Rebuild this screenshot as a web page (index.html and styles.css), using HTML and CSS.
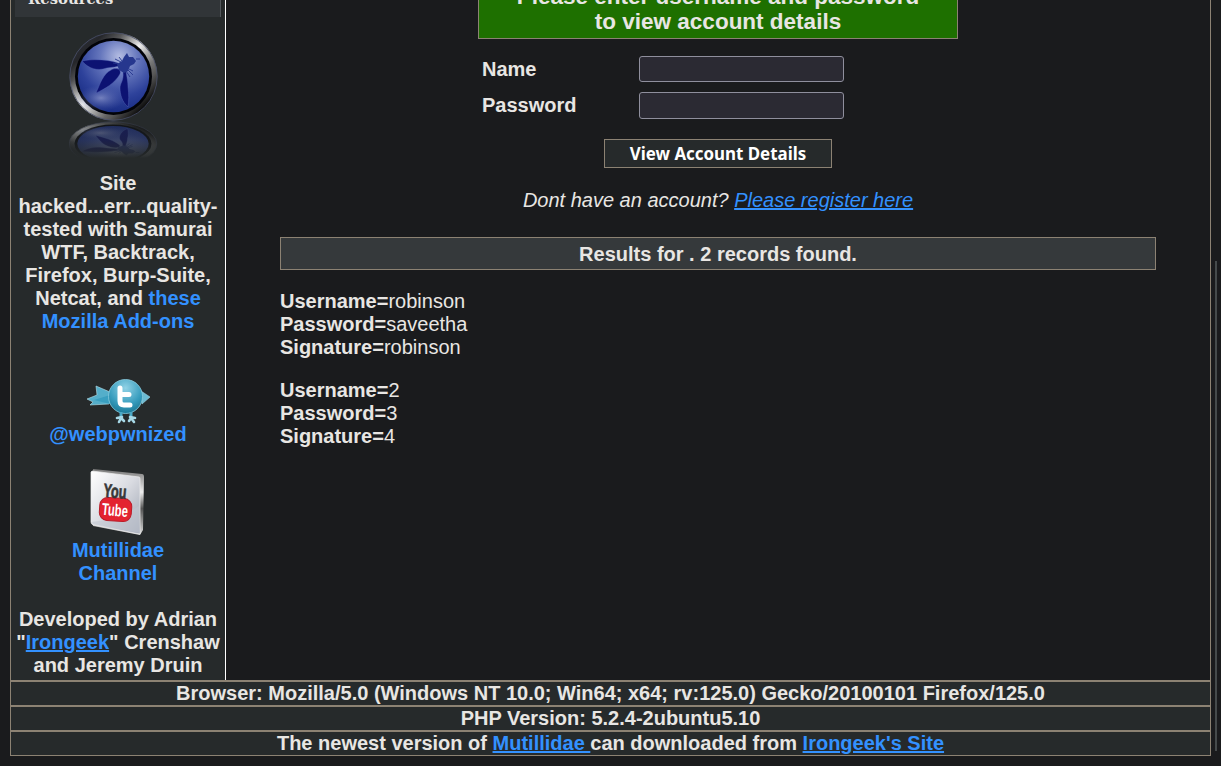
FILE: index.html
```html
<!DOCTYPE html>
<html lang="en">
<head>
<meta charset="utf-8">
<title>View Account Details</title>
<link rel="stylesheet" href="styles.css">
</head>
<body>
<div class="page">
  <div class="columns">
    <aside class="sidebar">
      <div class="menu-item"><span>Resources</span></div>
      <svg class="owasp" width="90" height="130" viewBox="0 0 90 130">
        <defs>
          <linearGradient id="ring" x1="0" y1="0" x2="1" y2="1">
            <stop offset="0" stop-color="#333a48"/><stop offset=".2" stop-color="#25262a"/><stop offset=".38" stop-color="#777"/>
            <stop offset=".5" stop-color="#aaa"/><stop offset=".72" stop-color="#555"/><stop offset=".86" stop-color="#050505"/><stop offset="1" stop-color="#555"/>
          </linearGradient>
          <radialGradient id="shineA"><stop offset="0" stop-color="#f2f2f2"/><stop offset="1" stop-color="#999" stop-opacity="0"/></radialGradient>
          <radialGradient id="blue" cx=".58" cy=".22" r=".75">
            <stop offset="0" stop-color="#b4bde2"/><stop offset=".35" stop-color="#6677bd"/><stop offset=".75" stop-color="#2e429b"/><stop offset="1" stop-color="#1c3088"/>
          </radialGradient>
          <radialGradient id="low"><stop offset="0" stop-color="#8792c8" stop-opacity=".8"/><stop offset="1" stop-color="#5060a8" stop-opacity="0"/></radialGradient>
          <linearGradient id="fade" x1="0" y1="0" x2="0" y2="1"><stop offset="0" stop-color="#262a2b" stop-opacity=".45"/><stop offset=".45" stop-color="#262a2b" stop-opacity=".55"/><stop offset=".9" stop-color="#262a2b"/></linearGradient>
          <clipPath id="disc"><circle cx="44.500" cy="44.500" r="44"/></clipPath>
          <g id="badge">
            <circle cx="44.500" cy="44.500" r="44" fill="url(#ring)"/>
            <g clip-path="url(#disc)"><circle cx="70" cy="14" r="21" fill="url(#shineA)"/><circle cx="14" cy="72" r="26" fill="url(#shineA)"/></g>
            <circle cx="44.500" cy="44.500" r="43.700" fill="none" stroke="#4a506b" stroke-width=".8"/>
            <circle cx="44.500" cy="44.500" r="38.500" fill="#020308"/>
            <circle cx="44.500" cy="44.500" r="35.700" fill="url(#blue)"/>
            <ellipse cx="32" cy="66" rx="24" ry="13" fill="url(#low)"/>
            <g fill="#0c1272" stroke="#5a6cba" stroke-width=".4">
              <path d="M13 29 C22 27 38 27 49 31 L50 34 C44 36 39 35 34 37 C25 39 17 34 13 29 Z"/>
              <path d="M27 61 C31 52 34 42 42 38 C47 35 53 37 51 42 C46 51 36 57 27 61 Z"/>
              <path d="M54 40 L57 39 C58 46 59 50 59 55 C60 62 60 69 59 75 C53 70 51 62 51 56 C51 51 55 49 54 40 Z"/>
            </g>
            <path fill="#26378e" d="M48 32 L53 29 L55 25 L58 21 L60 25 L64 25 L67 29 L65 32 L61 34 L59 39 L55 41 L50 38 Z"/>
            <path fill="none" stroke="#26378e" stroke-width=".9" d="M52 30 L46 27 M50 32 L44 31 M53 29 L50 25 M60 37 L64 39 M59 38 L64 43 M57 39 L61 45 M67 27 L71 27"/>
          </g>
        </defs>
        <use href="#badge"/>
        <g transform="translate(-.5 134) scale(1 -.5)"><use href="#badge"/></g>
        <rect y="90" width="90" height="40" fill="url(#fade)"/>
      </svg>
      <p class="tested">Site hacked...err...quality-tested with Samurai WTF, Backtrack, Firefox, Burp-Suite, Netcat, and <a class="plain">these Mozilla Add-ons</a></p>
      <svg class="twitter" width="66" height="45" viewBox="0 0 66 45">
        <defs><radialGradient id="bird" cx=".5" cy=".25" r=".8"><stop offset="0" stop-color="#91d2e6"/><stop offset=".6" stop-color="#389dbe"/><stop offset="1" stop-color="#16728f"/></radialGradient></defs>
        <path fill="#54aeca" stroke="#b9e2ed" stroke-width=".6" d="M24 13 L10 7 L11 16 L1 20 L7 23 L4 26 L23 25 Z"/>
        <path fill="#3a9fc0" d="M8 21 L24 16 L24 25 Z"/>
        <path fill="#6cbbd3" stroke="#9bd2e2" stroke-width=".6" d="M55 12 L64 18 L56 25 Z"/>
        <circle cx="39.500" cy="17.500" r="17" fill="url(#bird)" stroke="#8acde0" stroke-width=".8"/>
        <path fill="none" stroke="#4aa8c5" stroke-width="3" d="M35 33 L35 39 M45 33 L45 39"/>
        <path fill="none" stroke="#a7d8e6" stroke-width="2.600" stroke-linecap="round" d="M31 39 L36 38 M49 39 L44 38 M33 43 L35 39 L38 42 M43 42 L45 39 L48 43"/>
        <path fill="none" stroke="#fff" stroke-width="5" stroke-linecap="round" stroke-linejoin="round" d="M34 9 V22 Q34 26 38 26 H44 M34 15.500 H43"/>
      </svg>
      <a class="plain">@webpwnized</a>
      <svg class="youtube" width="56" height="70" viewBox="0 0 56 70">
        <defs><linearGradient id="tile" x1="0" y1="0" x2="1" y2="1"><stop offset="0" stop-color="#fff"/><stop offset=".5" stop-color="#d9dbe1"/><stop offset="1" stop-color="#9ca3b1"/></linearGradient>
        <linearGradient id="edge" x1="0" y1="0" x2="0" y2="1"><stop offset="0" stop-color="#777"/><stop offset=".35" stop-color="#eee"/><stop offset=".6" stop-color="#555"/><stop offset="1" stop-color="#ddd"/></linearGradient></defs>
        <path fill="url(#edge)" d="M3 1 L52 6 Q54 6 54 9 L53 62 L50 67 L3 58 Z"/>
        <path fill="url(#tile)" stroke="#eee" stroke-width=".7" d="M2 3 L49 9 Q50 9 50 11 V66 L3 57 Q1 56 1 54 V4 Z"/>
        <path fill="#c2c7d1" opacity=".6" d="M2 54 Q30 51 49 38 V65 L3 56 Z"/>
        <rect x="9.500" y="30" width="32" height="23" rx="8" fill="#e32330" stroke="#b91d29" transform="rotate(4 26 42)"/>
        <text class="yt-you" x="13" y="30" textLength="23" lengthAdjust="spacingAndGlyphs" transform="rotate(5 26 30)">You</text>
        <text class="yt-tube" x="12" y="48" textLength="26" lengthAdjust="spacingAndGlyphs" transform="rotate(5 26 42)">Tube</text>
      </svg>
      <a class="plain">Mutillidae<br>Channel</a>
      <p class="credits">Developed by Adrian "<a class="link">Irongeek</a>" Crenshaw and Jeremy Druin</p>
    </aside>
    <main class="content">
      <div class="notice">Please enter username and password<br>to view account details</div>
      <form class="login">
        <label for="user">Name</label><input id="user" type="text">
        <label for="pass">Password</label><input id="pass" class="tall" type="password">
      </form>
      <button class="submit" type="button">View Account Details</button>
      <p class="register">Dont have an account? <a class="link">Please register here</a></p>
      <div class="results">Results for . 2 records found.</div>
      <p class="record"><b>Username=</b>robinson<br><b>Password=</b>saveetha<br><b>Signature=</b>robinson</p>
      <p class="record"><b>Username=</b>2<br><b>Password=</b>3<br><b>Signature=</b>4</p>
    </main>
  </div>
  <div class="footer-row">Browser: Mozilla/5.0 (Windows NT 10.0; Win64; x64; rv:125.0) Gecko/20100101 Firefox/125.0</div>
  <div class="footer-row">PHP Version: 5.2.4-2ubuntu5.10</div>
  <div class="footer-row">The newest version of <a class="link">Mutillidae </a>can downloaded from <a class="link">Irongeek's Site</a></div>
</div>
<div class="scrollbar"></div>
</body>
</html>
```

FILE: styles.css
```css
* { box-sizing: border-box; }
html, body { height: 100%; }
body {
  margin: 0;
  padding-left: 10px;
  overflow: hidden;
  background: #1a1b1d;
  color: #e8e6e3;
  font: 20px/23px "Liberation Sans", Arial, sans-serif;
}
p { margin: 0; }
.page { width: 1201px; }
.columns {
  display: flex;
  height: 681px;
  border: 1px solid #8c8273;
  border-top: 0;
}
.sidebar {
  display: flex;
  flex-direction: column;
  align-items: center;
  width: 215px;
  border-right: 1px solid #fff;
  background: #262a2b;
  font-weight: bold;
  text-align: center;
}
.menu-item {
  display: flex;
  align-items: flex-end;
  align-self: flex-start;
  width: 206px;
  height: 17px;
  margin-left: 4px;
  padding: 0 0 8px 13px;
  overflow: hidden;
  border-right: 1px solid #52575b;
  background: #313538;
  font: bold 14.800px/20px "DejaVu Serif", serif;
}
.owasp { flex: none; margin: 15px 9px 0 0; }
.tested { width: 214px; margin-top: 10px; padding: 0 4px; }
.plain, .link { color: #3391ff; }
.link { text-decoration: underline; }
.twitter { flex: none; margin: 46px 0 -1px 2px; }
.youtube { flex: none; margin: 22px 0 1px; }
.yt-you, .yt-tube { font: bold 19px "Liberation Sans Narrow", "Liberation Sans", sans-serif; }
.yt-you { fill: #383838; stroke: #383838; stroke-width: .7px; }
.yt-tube { fill: #fff; font-size: 17px; }
.credits { width: 214px; margin-top: 23px; }
.content {
  display: flex;
  flex: 1;
  flex-direction: column;
  align-items: center;
  padding: 0 54px;
}
.notice {
  display: flex;
  flex: none;
  flex-direction: column;
  justify-content: flex-end;
  width: 480px;
  height: 39px;
  padding-bottom: 4px;
  border: 1px solid #8c8273;
  border-top: 0;
  background: #1e7000;
  font: bold 22.500px/25px "Liberation Sans", Arial, sans-serif;
  text-align: center;
}
.login {
  display: grid;
  grid-template-columns: 157px 205px;
  row-gap: 10px;
  align-items: center;
  width: 472px;
  margin-top: 17px;
  font-weight: bold;
}
.login input {
  width: 205px;
  height: 26px;
  border: 1px solid #8f8f9d;
  border-radius: 3px;
  background: #2b2a33;
}
.login .tall { height: 27px; }
.submit {
  width: 228px;
  height: 29px;
  margin-top: 20px;
  padding: 0;
  border: 1px solid #8c8273;
  background: #262a2b;
  color: #fff;
  font: bold 16.900px/20px "Noto Sans", sans-serif;
}
.register { margin-top: 21px; font-style: italic; }
.results {
  width: 876px;
  height: 33px;
  margin: 25px 0 20px;
  padding-top: 5px;
  border: 1px solid #8c8273;
  background: #35393b;
  font-weight: bold;
  text-align: center;
}
.record { align-self: flex-start; margin-bottom: 20px; }
.footer-row {
  height: 25px;
  border: 1px solid #8c8273;
  background: #262a2b;
  font-weight: bold;
  text-align: center;
}
.scrollbar {
  position: absolute;
  top: 261px;
  left: 1215px;
  width: 2px;
  height: 490px;
  background: #454a4b;
}
```
